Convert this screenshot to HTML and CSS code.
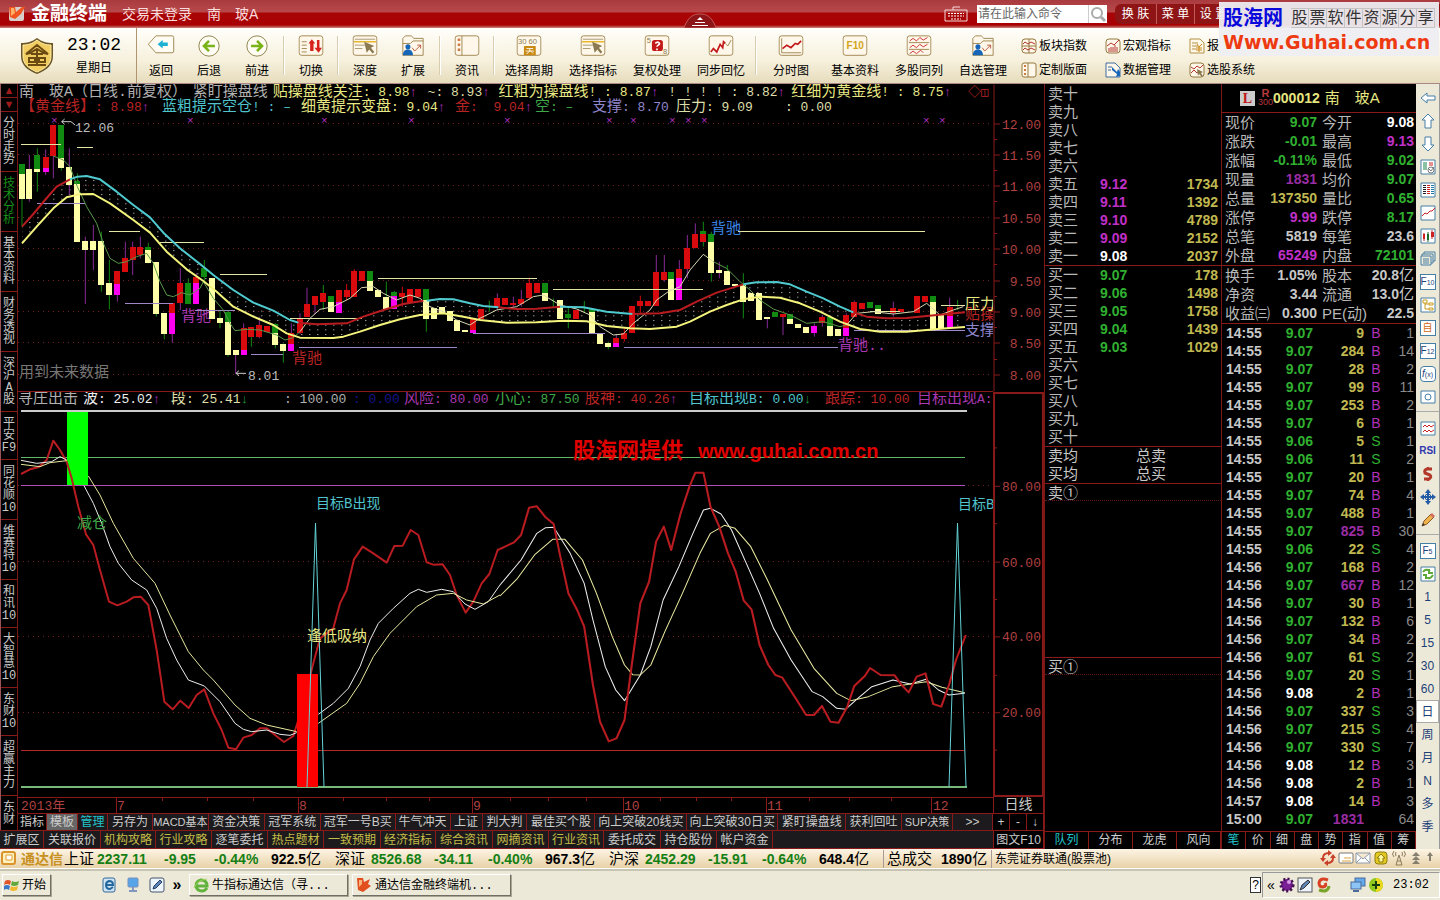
FILE: index.html
```html
<!DOCTYPE html>
<html lang="zh-CN">
<head>
<meta charset="utf-8">
<title>金融终端</title>
<link rel="stylesheet" href="styles.css">
</head>
<body>
<svg class="defs" width="0" height="0" aria-hidden="true">
  <defs>
    <symbol id="frame" viewBox="0 0 30 26"><rect x="1" y="1" width="28" height="23" rx="3" fill="#fff8ea" stroke="#94793f"/></symbol>
    <symbol id="pointer" viewBox="0 0 30 26"><rect x="1" y="1" width="28" height="23" rx="3" fill="#fff8ea" stroke="#94793f"/><path d="M3 5h24M3 12h12M3 16h9" stroke="#9c8b62" fill="none"/><path d="M2 8h26" stroke="#e8b72c" stroke-width="2"/><path d="M14 8l12 5-4 2 4 5-2 2-4-5-3 4z" fill="#8b7a51"/></symbol>
    <symbol id="folder" viewBox="0 0 30 26"><path d="M3 24V4l3-3h7l3 3h11v20z" fill="#fff8ea" stroke="#94793f"/><path d="M3 10h9l3-3h12" fill="none" stroke="#94793f"/><circle cx="9" cy="14" r="3" fill="#1565b8"/><path d="M3 24c0-5 3-7 6-7s6 2 6 7z" fill="#1565b8"/><path d="M14 15l3 4 7-7m-4 0h4v4" stroke="#b5472c" fill="none"/></symbol>
  </defs>
</svg>

<header class="titlebar">
  <svg class="logo" viewBox="0 0 18 18"><rect x="1" y="2" width="15" height="14" rx="2" fill="#d9cfca"/><path d="M1 2h6l1 5 6-5h3l-4 7-6 5-5-2z" fill="#f0551f"/><path d="M3 3h3l1 5-4 3z" fill="#ffb066"/></svg>
  <strong class="brand">金融终端</strong>
  <span class="title-text">交易未登录</span><span class="title-text">南　玻A</span>
  <button class="fold" aria-label="收起"><svg viewBox="0 0 36 16"><path d="M2 16C6 4 12 2 18 2s12 2 16 14z" fill="#8d1517" stroke="#c25a5a"/><path d="M18 5l3 3h-6z" fill="#fff"/><path d="M13 10.500h10M10 13.500h16" stroke="#fff"/></svg></button>
  <svg class="keyboard" viewBox="0 0 24 16"><path d="M1 4h22v11H1zM9 4V1h7" fill="none" stroke="#f6dada"/><path d="M4 7.500h16M4 10h16M7 13h10" stroke="#fff" stroke-dasharray="2 1"/></svg>
  <form class="search"><input type="text" placeholder="请在此输入命令" aria-label="命令"><button type="button" aria-label="搜索"><svg viewBox="0 0 18 17"><circle cx="8" cy="7" r="5" fill="none" stroke="#aaa" stroke-width="2"/><path d="M12 11l4 4" stroke="#aaa" stroke-width="3"/></svg></button></form>
  <nav class="title-menu"><button>换 肤</button><button>菜 单</button><button>设 置</button></nav>
  <div class="sponsor"><div><b>股海网</b><span class="boxed"><i>股</i><i>票</i><i>软</i><i>件</i><i>资</i><i>源</i><i>分</i><i>享</i></span></div><strong>Www.Guhai.com.cn</strong></div>
</header>

<section class="toolbar">
  <div class="clock">
    <svg viewBox="0 0 36 38"><path d="M18 1c5 4 10 5 16 5v13c0 9-6 14-16 18C8 33 2 28 2 19V6c6 0 11-1 16-5z" fill="#6b5527"/><path d="M18 3c5 4 9 5 14 5v11c0 8-5 12-14 16C9 31 4 27 4 19V8c5 0 9-1 14-5z" fill="#f2cd62" stroke="#fff0a8"/><path d="M7 17L18 8l11 9-4-1-7-4-7 4zM12 17h12M18 14v13M10 21h6v4h-6zM20 21h6v4h-6zM9 28h18" fill="none" stroke="#6b4b12" stroke-width="2"/></svg>
    <div><time>23:02</time><span>星期日</span></div>
  </div>
  <button class="tool"><svg viewBox="0 0 32 26"><path d="M1 11L10 1h19q2 0 2 2v16q0 2-2 2H10z" fill="#fffdf3" stroke="#94793f"/><path d="M12 11l6-5v3h6v4h-6v3z" fill="#1bb0d4"/></svg>返回</button>
  <button class="tool"><svg viewBox="0 0 30 26"><circle cx="15" cy="13" r="12" fill="#fffdf3" stroke="#7e7238"/><path d="M9 13h13M15 7l-6 6 6 6" fill="none" stroke="#7ab317" stroke-width="3"/></svg>后退</button>
  <button class="tool"><svg viewBox="0 0 30 26"><circle cx="15" cy="13" r="12" fill="#fffdf3" stroke="#7e7238"/><path d="M8 13h13M15 7l6 6-6 6" fill="none" stroke="#7ab317" stroke-width="3"/></svg>前进</button>
  <hr>
  <button class="tool"><svg viewBox="0 0 30 26"><use href="#frame"/><path d="M4 8h6M4 12h6M4 16h6M4 20h6" stroke="#94793f"/><path d="M12 10l4-5 4 5h-2v9h-4v-9zM19 15h3V6h3v9h3l-4 6z" fill="#d8201c"/></svg>切换</button>
  <hr>
  <button class="tool"><svg viewBox="0 0 30 26"><use href="#pointer"/></svg>深度</button>
  <button class="tool"><svg viewBox="0 0 30 26"><use href="#folder"/></svg>扩展</button>
  <hr>
  <button class="tool"><svg viewBox="0 0 30 26"><use href="#frame"/><path d="M9 1v23" stroke="#94793f"/><path d="M4 4h3v3H4zM4 10h3v3H4zM4 16h3v3H4z" fill="#cd7a40"/></svg>资讯</button>
  <hr>
  <button class="tool wide"><svg viewBox="0 0 30 26"><use href="#frame"/><text x="2" y="11" class="mini">30 60</text><rect x="9" y="13" width="14" height="11" rx="1" fill="#c98a13"/><path d="M12 16h8M11 19h10M16 16c0 3-1 5-4 6M16 18l4 4" stroke="#fff" fill="none"/></svg>选择周期</button>
  <button class="tool wide"><svg viewBox="0 0 30 26"><use href="#pointer"/></svg>选择指标</button>
  <button class="tool wide"><svg viewBox="0 0 30 26"><use href="#frame"/><rect x="9" y="6" width="13" height="13" rx="3" fill="#c3191b"/><path d="M13 10q3-3 5 0c0 2-3 2-3 4m0 2v2" fill="none" stroke="#fff" stroke-width="2"/><text x="3" y="10" class="mini">5</text><text x="22" y="23" class="mini">8</text></svg>复权处理</button>
  <button class="tool wide"><svg viewBox="0 0 30 26"><use href="#frame"/><path d="M3 20l3-4 4 4 4-9 3 4 1-7 2 2" fill="none" stroke="#c3191b" stroke-width="2"/><path d="M20 10l3 3 4-7" fill="none" stroke="#94793f"/></svg>同步回忆</button>
  <hr>
  <button class="tool wide"><svg viewBox="0 0 30 26"><use href="#frame"/><path d="M4 4v17h23" fill="none" stroke="#94793f"/><path d="M5 16l5-4 5 3 5-5 3 1 4-4" fill="none" stroke="#c3191b" stroke-width="2"/></svg>分时图</button>
  <button class="tool wide"><svg viewBox="0 0 30 26"><use href="#frame"/><text x="5" y="17" class="f10">F10</text></svg>基本资料</button>
  <button class="tool wide"><svg viewBox="0 0 30 26"><use href="#frame"/><path d="M3 9h24M3 17h24" stroke="#94793f"/><path d="M4 7l4-3 4 3 4-4 4 3 5-3M4 15l4-3 4 3 4-4 4 3 5-3M4 22l4-3 4 3 5-4 3 3" fill="none" stroke="#c3191b"/></svg>多股同列</button>
  <button class="tool wide"><svg viewBox="0 0 30 26"><use href="#folder"/></svg>自选管理</button>
  <div class="small-tools">
    <button><svg viewBox="0 0 16 16"><rect x="1" y="1" width="14" height="14" rx="3" fill="#fff8ea" stroke="#94793f"/><path d="M8 1v14M1 8h14" stroke="#94793f"/><path d="M2 6l2-2 3 2 3-2 4 2M2 12l2-2 3 2 3-2 4 2" fill="none" stroke="#b5342c"/></svg>板块指数</button>
    <button><svg viewBox="0 0 16 16"><rect x="1" y="1" width="14" height="14" rx="3" fill="#fff8ea" stroke="#94793f"/><path d="M4 14v-4M6 14V9M8 14v-5M10 14V7M12 14V9" stroke="#b5342c"/><path d="M2 8l4-3 3 2 5-5" fill="none" stroke="#b5342c"/></svg>宏观指标</button>
    <button><svg viewBox="0 0 16 16"><path d="M1 1h10l4 4v10H1z" fill="#fff8ea" stroke="#b39145"/><path d="M3 5h6M3 8h6M3 11h4" stroke="#b39145"/><path d="M8 6l2 3 3-3M10 9v5M7 10h6M7 12h6" stroke="#c8891a" fill="none"/></svg>报</button>
    <button><svg viewBox="0 0 16 16"><rect x="1" y="1" width="14" height="14" rx="2" fill="#fff8ea" stroke="#94793f"/><path d="M7 1v14" stroke="#94793f"/><path d="M3 4h2M3 8h2M3 12h2" stroke="#cd7a40" stroke-width="2"/></svg>定制版面</button>
    <button><svg viewBox="0 0 16 16"><path d="M1 1h9l5 5v9H1z" fill="#fff8ea" stroke="#3c6b9d"/><path d="M3 5h4M3 8h3" stroke="#3c6b9d"/><path d="M7 5l5 5 1-3 2 3v4l-4 1 1-3-5-4z" fill="#1565b8"/></svg>数据管理</button>
    <button><svg viewBox="0 0 16 16"><rect x="1" y="1" width="14" height="14" rx="3" fill="#fff8ea" stroke="#94793f"/><path d="M2 5l3 2 3-3 3 2 3-3M2 11l3-3 3 3 3-2" stroke="#b5342c" fill="none"/><path d="M8 7l6 3-2 1 2 3-1 1-3-3-1 2z" fill="#8b7a51"/></svg>选股系统</button>
  </div>
</section>

<main class="workspace">
  <section class="left">
    <div class="upper">
      <nav class="vtabs">
        <div class="updown"><button aria-label="上一个">▲</button><button aria-label="下一个">▼</button></div>
        <button>分<br>时<br>走<br>势</button><button class="on">技<br>术<br>分<br>析</button><button>基<br>本<br>资<br>料</button><button>财<br>务<br>透<br>视</button><button>深<br>沪<br>A<br>股</button><button>平<br>安<br>F9</button><button>同<br>花<br>顺<br>10</button><button>维<br>赛<br>特<br>10</button><button>和<br>讯<br>10</button><button>大<br>智<br>慧<br>10</button><button>东<br>财<br>10</button><button>超<br>赢<br>主<br>力</button><button class="last">东<br>财</button>
      </nav>
      <div class="charts">
        <div class="plot">
          <div class="legend l1"><span class="c-gray">南　玻A（日线.前复权）</span><span class="c-gray">紧盯操盘线</span><span class="c-yellow">贴操盘线关注<i>: 8.98</i><em>↑</em></span><span class="c-pale"><i>~: 8.93</i><em>↑</em></span><span class="c-yellow">红粗为操盘线<i>! : 8.87</i><em>↑</em></span><span class="c-pale"><i>! ! ! ! : 8.82</i><em>↑</em></span><span class="c-yellow">红细为黄金线<i>! : 8.75</i><em>↑</em></span><span class="c-red"><i>◇◫</i></span></div>
          <div class="legend l2"><span class="c-red">【黄金线】<i>: 8.98</i><em>↑</em></span><span class="c-cyan">蓝粗提示空仓<i>! : –</i></span><span class="c-yellow">细黄提示变盘<i>: 9.04</i><em>↑</em></span><span class="c-red">金<i>:  9.04</i><em>↑</em></span><span class="c-green">空<i>: –</i></span><span class="c-lilac">支撑<i>: 8.70</i></span><span class="c-pale">压力<i>: 9.09</i></span><span class="c-pale"><i>: 0.00</i></span></div>
          <svg class="kline" viewBox="18 117 975 274">
            <defs>
              <pattern id="dots" width="24" height="14" x="64" y="0" patternUnits="userSpaceOnUse"><rect width="3" height="3" fill="#ddd"/></pattern>
            </defs>
            <path class="grid" d="M18 123.500H993M18 154.500H993M18 185.500H993M18 217.500H993M18 248.500H993M18 280.500H993M18 311.500H993M18 342.500H993M18 374.500H993"/>
            <g class="marks"><text x="51" y="124">×</text><text x="187" y="124">×</text><text x="321" y="124">×</text><text x="408" y="124">×</text><text x="504" y="124">×</text><text x="606" y="124">×</text><text x="630" y="124">×</text><text x="669" y="124">×</text><text x="685" y="124">×</text><text x="701" y="124">×</text><text x="923" y="124">×</text><text x="939" y="124">×</text></g>
            <text x="181" y="321" class="c-purple">背驰</text><text x="292" y="363" class="c-red">背驰</text><text x="838" y="350" class="c-purple">背驰..</text>
            <text x="19" y="377" fill="#777">用到未来数据</text>
            <g transform="translate(0 110) scale(.33333)">
              <path fill="url(#dots)" d="M66 350L135 270L205 208L232 200L260 198L300 208L350 245L400 285L450 322L490 368L540 415L600 462L640 495L700 540L760 578L820 602L895 638L1040 640L1090 620L1150 600L1210 582L1260 572L1320 567L1360 568L1450 588L1495 592L1610 596L1680 590L1750 592L1820 605L1897 612L1980 610L2040 600L2090 575L2150 548L2230 523L2270 517L2330 516L2370 523L2470 565L2560 607L2600 620L2660 625L2720 624L2895 607V651L2780 660L2640 665L2580 657L2520 635L2460 605L2400 580L2340 563L2280 560L2230 568L2130 605L2070 635L2030 650L1950 657L1890 655L1820 648L1760 634L1690 632L1520 638L1440 630L1390 620L1330 610L1260 615L1200 628L1140 645L1080 665L1030 680L990 684H900L820 645L760 620L700 590L650 545L610 513L560 478L500 425L450 368L400 330L330 280L280 252H240L200 262L160 295L110 350L66 400z"/>
              <path class="wick green" d="M66 192V350M112 115V245M184 150V182M232 190V230M304 365V545M328 450V598M445 398V460M469 456V620M493 610V688M565 505V560M613 450V520M660 600V655M684 600V740M754 680V710M850 700V758M970 525V600M826 640V715"/>
              <path class="wick purple" d="M88 135V275M137 118V195M160 138V205M208 115V255M256 380V582M280 345V480M352 483V575M376 395V483M398 395V495M421 380V445M517 600V698M541 475V600M589 490V560M707 735V792M731 640V700M778 620V685M874 640V720M900 610V672M921 533V583M945 558V612"/>
              <path class="bar green" d="M66 162V192M112 135V178M184 45V143M445 410V420M565 518V582M613 475V500M684 605V637M826 643V668M993 558V575M232 212V222"/>
              <path class="bar yellow" d="M66 192V267M88 178V267M112 178V186M184 143V173M208 172V225M232 222V395M256 393V420M280 393V420M304 393V525M328 520V555M445 420V458M469 456V612M493 608V672M637 503V627M660 624V640M684 637V735M707 720V735M826 668V705M850 702V723M993 575V605"/>
              <path class="bar red" d="M137 142V176M160 45V138M352 483V522M376 445V486M398 410V450M421 410V435M517 578V608M541 518V580M589 500V518M731 655V720M754 650V680M778 645V682M802 648V665M874 670V702M900 628V670M921 583V622M945 558V585M970 550V575M1017 540V575"/>
              <path class="bar magenta" d="M137 175V185M352 522V555M517 608V672M589 518V582M731 720V735M874 702V722M1017 575V608"/>
              <g transform="translate(990)">
                <path class="wick green" d="M169 515V560M193 543V560M289 537V665M478 572V605M670 565V592M715 590V655M763 573V610M835 695V718M145 540V560"/>
                <path class="wick red" d="M50 522V570M217 530V590M598 503V570M73 478V560M883 655V695M931 557V610"/>
                <path class="wick purple" d="M502 550V600M550 560V590M574 540V590M859 672V710M979 435V490M1003 435V515"/>
                <path class="bar green" d="M121 484V513M193 545V557M289 537V570M646 519V548M715 613V625M787 597V606"/>
                <path class="bar yellow" d="M121 513V543M145 541V560M169 560V597M289 570V627M313 595V627M337 590V608M361 603V633M382 630V662M406 660V666M646 548V572M691 570V627M787 606V669M811 669V703M835 698V712"/>
                <path class="bar red" d="M50 540V560M73 483V560M97 484V513M217 550V560M241 537V578M265 537V562M430 625V660M454 597V628M502 563V592M526 563V585M550 578V585M574 567V583M598 518V563M622 518V550M739 600V627M859 683V700M883 668V688M907 587V668M931 573V588M955 573V588M979 487V588M1003 487V510"/>
                <path class="bar magenta" d="M193 557V597M430 660V668M859 700V712"/>
              </g>
              <g transform="translate(1980)">
                <path class="wick green" d="M130 335V410M154 365V515M202 465V525M250 490V625M511 620V680M820 558V600M893 570V600"/>
                <path class="wick purple" d="M58 450V480M82 375V505M106 340V415M178 455V505M322 622V655M369 615V675M463 640V680M583 572V610M700 575V620M869 563V600M487 615V650M559 610V660"/>
                <path class="bar green" d="M34 487V507M130 363V372M154 372V395M346 605V622M391 612V627M511 622V648M631 577V595M655 585V598M820 558V577"/>
                <path class="bar yellow" d="M34 507V570M154 395V490M178 480V490M202 482V525M226 522V528M250 525V575M274 550V573M298 550V630M322 622V628M391 627V643M415 643V655M439 650V668M511 648V678M535 657V678M655 598V612M820 577V657M844 612V657"/>
                <path class="bar red" d="M58 478V503M82 413V478M106 372V415M130 372V397M369 613V622M487 622V640M559 615V655M583 577V620M607 578V597M700 595V608M724 597V607M772 558V610M796 558V575M869 590V617"/>
                <path class="bar magenta" d="M58 503V570M463 648V668M559 655V678M869 617V655"/>
              </g>
              <path class="level pale" d="M63 103H182M231 112H279M328 364H420M480 397H612M660 495H801M870 625H1085M1135 505H1610M1660 538H2108M2215 364H2775M2823 586H2895M2610 604H2700"/>
              <path class="level lilac" d="M112 280H255M375 580H520M585 601H705M754 733H850M897 712H1372M1420 670H1815M1872 712H2514M2563 661H2895"/>
              <path class="avg green-line" d="M160 138L190 150L210 170L232 230L260 290L290 340L310 400L330 445L355 460L380 455L410 440L440 430L460 460L480 515L500 555L520 560L545 548L570 555L600 535L610 515L640 565L670 600L690 640L705 662L740 658L780 660L830 675L855 690L880 683L900 665"/>
              <path class="avg" d="M900 665L930 625L960 598L1000 590L1050 565L1085 533L1120 530L1150 550L1190 570L1230 555L1260 565L1290 590L1330 605L1370 630L1410 645L1440 625L1490 600L1550 590L1600 560L1630 555L1680 585L1730 597L1770 615L1800 650L1840 675L1870 672L1900 640L1950 600L1970 570L2005 545L2040 530L2070 480L2110 433L2140 455"/>
              <path class="avg green-line" d="M2140 455L2180 475L2220 515L2250 540L2280 570L2320 597L2370 615L2420 640L2470 635L2520 650L2540 645"/>
              <path class="avg" d="M2540 645L2570 610L2620 605L2680 612L2740 605L2780 580L2820 615L2860 600L2890 590"/>
              <path class="band red" d="M66 350L100 312L135 270L170 230L210 208M895 638L950 643L1040 640L1090 620L1150 600L1210 582L1270 572M1495 592L1550 597L1610 596L1680 590M1897 612L1980 610L2040 600L2090 575L2150 548L2230 523M2560 607L2600 620L2660 625L2720 624L2780 618L2895 607"/>
              <path class="band cyan" d="M210 208L232 200L260 198L300 208L350 245L400 285L450 322L490 368L540 415L600 462L640 495L700 540L760 578L820 602L870 630L895 638M1280 572L1320 567L1360 568L1410 580L1450 588L1495 592M1680 590L1750 592L1820 605L1897 612M2230 523L2270 517L2330 516L2370 523L2420 545L2470 565L2520 590L2560 607"/>
              <path class="band yellow" d="M66 400L110 350L160 295L200 262L240 253L280 252L330 280L400 330L450 368L500 425L560 478L610 513L650 545L700 590L760 620L820 645L860 670L900 683L1000 684L1030 680L1080 665L1140 645L1200 628L1260 615L1330 610L1390 620L1440 630L1520 638L1610 637L1690 632L1760 634L1820 648L1890 655L1950 657L2030 650L2070 635L2130 605L2180 585L2230 568L2280 560L2340 563L2400 580L2460 605L2520 635L2580 657L2640 665L2720 665L2780 660L2840 655L2895 651"/>
              <path d="M708 790h30M708 790l9-8M708 790l9 8M185 35h28l12 10M185 35l9-8M185 35l9 8" fill="none" stroke="#ccc" stroke-width="3"/>
            </g>
            <text x="75" y="132" class="num">12.06</text><text x="248" y="380" class="num">8.01</text>
            <text x="711" y="233" fill="#3a82e0">背驰</text>
            <text x="965" y="319" class="c-red">贴操</text><text x="965" y="309" class="c-yellow">压力</text><text x="965" y="335" class="c-lilac">支撑</text>
          </svg>
        </div>
        <svg class="axis" viewBox="993 84 51 307">
          <path d="M994 84V391M994 123.500h6M994 154.500h6M994 185.500h6M994 217.500h6M994 248.500h6M994 280.500h6M994 311.500h6M994 342.500h6M994 374.500h6M994 139h3M994 170h3M994 201h3M994 233h3M994 264h3M994 296h3M994 327h3M994 359h3" class="axis-line"/>
          <text x="1041" y="128">12.00</text><text x="1041" y="159">11.50</text><text x="1041" y="190">11.00</text><text x="1041" y="222">10.50</text><text x="1041" y="253">10.00</text><text x="1041" y="285">9.50</text><text x="1041" y="316">9.00</text><text x="1041" y="347">8.50</text><text x="1041" y="379">8.00</text>
        </svg>
        <div class="plot sub">
          <div class="legend l3"><span class="c-gray">寻庄出击</span><span class="c-white">波<i>: 25.02</i><em>↑</em></span><span class="c-pale">段<i>: 25.41</i><em class="down">↓</em></span><span class="c-gray"><i>: 100.00</i></span><span class="c-navy"><i>: 0.00</i></span><span class="c-purple">风险<i>: 80.00</i></span><span class="c-green">小心<i>: 87.50</i></span><span class="c-red">股神<i>: 40.26</i><em>↑</em></span><span class="c-cyan">目标出现<i>B: 0.00</i><em class="down">↓</em></span><span class="c-red">跟踪<i>: 10.00</i></span><span class="c-purple">目标出现<i>A:</i></span></div>
          <svg class="kline" viewBox="18 408 975 388">
            <path class="grid" d="M18 485.500H993M18 561.500H993M18 636.500H993M18 712.500H993"/>
            <path d="M21 411H967" stroke="#ccc" stroke-width="2"/>
            <g class="rules"><path d="M21 457.500H965" stroke="#62b866"/><path d="M21 485.500H965" stroke="#b050b8"/><path d="M21 750.500H965" stroke="#b82828"/></g>
            <path d="M21 787H967" stroke="#78b878" stroke-width="2"/>
            <rect x="67" y="412" width="21" height="73" fill="#0f0"/>
            <g transform="translate(0 400) scale(.33333)" class="osc">
              <path class="o-red" d="M63 222L90 208L115 202L140 180L160 122L180 150L200 185L215 235L235 320L258 403L280 435L300 510L327 605L352 616L380 605L400 592L422 590L445 615L470 750L493 905L518 928L541 902L566 924L590 885L613 868L640 940L665 990L685 1043L708 1048L730 1013L755 1005L780 985L800 985L825 1005L852 1026L880 1008L895 960L925 850L940 790L960 715L1000 685L1020 610L1040 570L1062 478L1088 440L1120 460L1160 488L1183 438L1208 437L1232 390L1255 405L1280 487L1300 494L1328 493L1350 525L1370 585L1397 638L1420 605L1445 550L1468 522L1493 450L1500 447"/>
              <path class="o-white" d="M63 181L110 190L155 185L180 170L200 180M252 257L280 310L305 370L330 440L355 490L395 540L440 570L470 625L500 715L530 780L565 840L613 858L660 905L705 970L730 988L755 995L800 990L840 1003L870 1006L890 998M955 943L1000 910L1045 865L1080 800L1110 720L1135 670L1180 625L1230 580L1255 568L1280 577L1325 568L1360 575L1395 612L1425 628L1465 605L1500 555"/>
              <path class="o-yellow" d="M63 193L120 200L150 188L200 182M265 228L300 285L340 370L400 475L465 550L510 645L565 755L610 810L640 840L705 915L750 955L800 975L890 995M955 970L1040 910L1080 850L1120 770L1170 700L1250 620L1310 585L1360 580L1400 600L1450 612L1500 585"/>
            </g>
            <g transform="translate(500 380) scale(.35077 .33333)" class="osc">
              <path class="o-white" d="M0 615L60 540L105 460L130 443L153 442L200 520L240 610L265 720L300 860L330 930L355 962L400 885L430 800L465 660L510 560L550 460L580 390L600 385L630 402L660 450L700 545L740 640L780 745L830 840L890 935L920 950L960 985L985 988L1020 955L1060 920L1120 900L1170 912L1215 898L1250 930L1280 945L1325 940"/>
              <path class="o-yellow" d="M0 648L50 595L100 523L150 478L185 478L235 540L275 640L320 770L355 855L378 884L400 885L430 855L470 755L520 640L570 520L600 460L640 436L670 445L715 500L760 595L830 750L895 865L960 940L1000 962L1050 950L1120 920L1170 912L1215 905L1260 922L1325 938"/>
              <path class="o-red" d="M0 507L40 487L60 465L83 383L105 379L130 412L153 432L170 520L195 640L220 690L240 740L265 915L285 1025L310 1084L332 1075L355 1020L375 860L400 670L425 605L445 485L467 440L488 510L515 400L540 320L557 278L580 278L600 380L625 440L650 520L672 575L695 662L717 688L740 795L765 855L785 885L805 893L840 950L873 1005L895 1005L918 978L942 1025L965 1028L990 980L1010 918L1040 888L1055 864L1085 885L1125 886L1145 915L1165 937L1188 890L1213 880L1235 972L1258 980L1280 915L1300 840L1328 765"/>
            </g>
            <rect x="297" y="674" width="21" height="113" fill="#f00"/>
            <path d="M307 787L315.500 523L324 787M949 787L957.500 523L966 787" fill="none" stroke="#63d3d6"/>
            <text x="316" y="508" class="c-cyan t14">目标B出现</text><text x="958" y="509" class="c-cyan t14">目标B</text>
            <text x="77" y="528" class="c-green">减仓</text><text x="307" y="641" class="c-yellow">逢低吸纳</text>
            <text x="573" y="458" class="promo"><tspan class="promo-cn">股海网提供</tspan></text><text x="698" y="458" class="promo">www.guhai.com.cn</text>
          </svg>
        </div>
        <svg class="axis sub-axis" viewBox="993 391 51 406">
          <path d="M994 392H1043V796H994z" class="axis-line bold"/>
          <path d="M994 485.500h6M994 561.500h6M994 636.500h6M994 712.500h6M994 447h3M994 523h3M994 599h3M994 675h3M994 750h3" class="axis-line"/>
          <text x="1041" y="490">80.00</text><text x="1041" y="566">60.00</text><text x="1041" y="641">40.00</text><text x="1041" y="717">20.00</text>
        </svg>
        <svg class="dates" viewBox="18 797 975 16">
          <path d="M18 797.500H993M116.500 797V813M298.500 797V813M472.500 797V813M623.500 797V813M766.500 797V813M931.500 797V813M162.500 797v4M207.500 797v4M253.500 797v4M343.500 797v4M386.500 797v4M429.500 797v4M510.500 797v4M548.500 797v4M586.500 797v4M660.500 797v4M696.500 797v4M731.500 797v4M809.500 797v4M849.500 797v4M891.500 797v4" class="axis-line"/>
          <text x="21" y="810">2013年</text><text x="117" y="810">7</text><text x="299" y="810">8</text><text x="473" y="810">9</text><text x="624" y="810">10</text><text x="767" y="810">11</text><text x="933" y="810">12</text>
        </svg>
        <div class="period">日线</div>
        <nav class="tabs row1"><button class="nobg">指标</button><button class="sel">模板</button><button class="cy">管理</button><button>另存为</button><button class="tight">MACD基本</button><button>资金决策</button><button>冠军系统</button><button>冠军一号B买</button><button>牛气冲天</button><button>上证</button><button>判大判</button><button>最佳买个股</button><button>向上突破20线买</button><button>向上突破30日买</button><button>紧盯操盘线</button><button>获利回吐</button><button class="tight">SUP决策</button><button>&gt;&gt;</button></nav>
        <nav class="tabs zoomers"><button class="nobg">+</button><button class="nobg">-</button><button class="nobg">↓</button></nav>
      </div>
    </div>
    <nav class="tabs row2"><button>扩展区</button><button>关联报价</button><button class="ye">机构攻略</button><button class="ye">行业攻略</button><button>逐笔委托</button><button class="ye">热点题材</button><button class="ye">一致预期</button><button class="ye">经济指标</button><button class="ye">综合资讯</button><button class="ye">网摘资讯</button><button class="ye">行业资讯</button><button>委托成交</button><button>持仓股份</button><button>帐户资金</button><span></span><button class="nobg">图文F10</button></nav>
  </section>

  <section class="book">
    <table class="quotes">
      <tr><th>卖十<td><td></tr><tr><th>卖九<td><td></tr><tr><th>卖八<td><td></tr><tr><th>卖七<td><td></tr><tr><th>卖六<td><td></tr>
      <tr><th>卖五<td class="up">9.12<td>1734</tr><tr><th>卖四<td class="up">9.11<td>1392</tr><tr><th>卖三<td class="up">9.10<td>4789</tr><tr><th>卖二<td class="up">9.09<td>2152</tr><tr><th>卖一<td class="eq">9.08<td>2037</tr>
    </table>
    <table class="quotes">
      <tr><th>买一<td class="dn">9.07<td>178</tr><tr><th>买二<td class="dn">9.06<td>1498</tr><tr><th>买三<td class="dn">9.05<td>1758</tr><tr><th>买四<td class="dn">9.04<td>1439</tr><tr><th>买五<td class="dn">9.03<td>1029</tr>
      <tr><th>买六<td><td></tr><tr><th>买七<td><td></tr><tr><th>买八<td><td></tr><tr><th>买九<td><td></tr><tr><th>买十<td><td></tr>
    </table>
    <div class="sums"><span>卖均</span><span>总卖</span><span>买均</span><span>总买</span></div>
    <div class="queue"><p>卖①</p></div>
    <div class="queue"><p>买①</p></div>
    <nav class="tabs four"><button class="cy nobg">队列</button><button class="nobg">分布</button><button class="nobg">龙虎</button><button class="nobg">风向</button></nav>
  </section>

  <section class="info">
    <h1><span class="flag">L</span><span class="r300"><b>R</b>300</span><b>000012</b><span>南　玻A</span></h1>
    <table class="facts">
      <tr><th>现价<td class="dn">9.07<th>今开<td class="eq">9.08</tr>
      <tr><th>涨跌<td class="dn">-0.01<th>最高<td class="up">9.13</tr>
      <tr><th>涨幅<td class="dn">-0.11%<th>最低<td class="dn">9.02</tr>
      <tr><th>现量<td class="pu">1831<th>均价<td class="dn">9.07</tr>
      <tr><th>总量<td class="vo">137350<th>量比<td class="dn">0.65</tr>
      <tr><th>涨停<td class="up">9.99<th>跌停<td class="dn">8.17</tr>
      <tr><th>总笔<td>5819<th>每笔<td>23.6</tr>
      <tr><th>外盘<td class="up">65249<th>内盘<td class="dn">72101</tr>
    </table>
    <table class="facts">
      <tr><th>换手<td>1.05%<th>股本<td>20.8<i>亿</i></tr>
      <tr><th>净资<td>3.44<th>流通<td>13.0<i>亿</i></tr>
      <tr><th>收益㈢<td>0.300<th>PE(动)<td>22.5</tr>
    </table>
    <table class="tape">
      <tr><td>14:55<td>9.07<td>9<td>B<td>1</tr>
      <tr><td>14:55<td>9.07<td>284<td>B<td>14</tr>
      <tr><td>14:55<td>9.07<td>28<td>B<td>2</tr>
      <tr><td>14:55<td>9.07<td>99<td>B<td>11</tr>
      <tr><td>14:55<td>9.07<td>253<td>B<td>2</tr>
      <tr><td>14:55<td>9.07<td>6<td>B<td>1</tr>
      <tr><td>14:55<td>9.06<td>5<td class="s">S<td>1</tr>
      <tr><td>14:55<td>9.06<td>11<td class="s">S<td>2</tr>
      <tr><td>14:55<td>9.07<td>20<td>B<td>1</tr>
      <tr><td>14:55<td>9.07<td>74<td>B<td>4</tr>
      <tr><td>14:55<td>9.07<td>488<td>B<td>1</tr>
      <tr><td>14:55<td>9.07<td class="big">825<td>B<td>30</tr>
      <tr><td>14:55<td>9.06<td>22<td class="s">S<td>4</tr>
      <tr><td>14:56<td>9.07<td>168<td>B<td>2</tr>
      <tr><td>14:56<td>9.07<td class="big">667<td>B<td>12</tr>
      <tr><td>14:56<td>9.07<td>30<td>B<td>1</tr>
      <tr><td>14:56<td>9.07<td>132<td>B<td>6</tr>
      <tr><td>14:56<td>9.07<td>34<td>B<td>2</tr>
      <tr><td>14:56<td>9.07<td>61<td class="s">S<td>2</tr>
      <tr><td>14:56<td>9.07<td>20<td class="s">S<td>1</tr>
      <tr><td>14:56<td class="eq">9.08<td>2<td>B<td>1</tr>
      <tr><td>14:56<td>9.07<td>337<td class="s">S<td>3</tr>
      <tr><td>14:56<td>9.07<td>215<td class="s">S<td>4</tr>
      <tr><td>14:56<td>9.07<td>330<td class="s">S<td>7</tr>
      <tr><td>14:56<td class="eq">9.08<td>12<td>B<td>3</tr>
      <tr><td>14:56<td class="eq">9.08<td>2<td>B<td>1</tr>
      <tr><td>14:57<td class="eq">9.08<td>14<td>B<td>3</tr>
      <tr><td>15:00<td>9.07<td class="big">1831<td><td>64</tr>
    </table>
    <nav class="tabs eight"><button class="cy nobg">笔</button><button class="nobg">价</button><button class="nobg">细</button><button class="nobg">盘</button><button class="nobg">势</button><button class="nobg">指</button><button class="nobg">值</button><button class="nobg">筹</button></nav>
  </section>

  <nav class="strip">
    <button aria-label="左"><svg viewBox="0 0 16 16"><path d="M1 8l6-5v3h8v4H7v3z" fill="#fff" stroke="#467fa6"/></svg></button>
    <button aria-label="上"><svg viewBox="0 0 16 16"><path d="M8 1l6 6h-3v8H5V7H2z" fill="#fff" stroke="#467fa6"/></svg></button>
    <button aria-label="下"><svg viewBox="0 0 16 16"><path d="M8 15l6-6h-3V1H5v8H2z" fill="#fff" stroke="#467fa6"/></svg></button>
    <button aria-label="检查"><svg viewBox="0 0 16 16"><path d="M1 1h14v14H1z" fill="#fff" stroke="#467fa6"/><path d="M3 4h4M3 6h4M3 8h4M3 10h4" stroke="#188548"/><path d="M9 4h4M9 6h4" stroke="#c22"/><circle cx="11" cy="11" r="3" fill="#fff" stroke="#777"/><path d="M9 10l2 2 3-4" fill="none" stroke="#777"/></svg></button>
    <button aria-label="列表"><svg viewBox="0 0 16 16"><path d="M1 1h14v14H1z" fill="#fff" stroke="#467fa6"/><path d="M3 3.500h3M3 5.500h3M3 7.500h3M3 9.500h3M3 11.500h3" stroke="#222"/><path d="M7 3.500h3M7 5.500h3M7 7.500h3M7 9.500h3M7 11.500h3" stroke="#c22"/><path d="M11 3.500h3M11 5.500h3M11 7.500h3M11 9.500h3M11 11.500h3" stroke="#27a"/></svg></button>
    <button aria-label="走势"><svg viewBox="0 0 16 16"><path d="M1 1h14v14H1z" fill="#fff" stroke="#467fa6"/><path d="M2 11l3-3 2 1 3-3h2l3-3" fill="none" stroke="#c22"/></svg></button>
    <button aria-label="K线"><svg viewBox="0 0 16 16"><path d="M1 1h14v14H1z" fill="#fff" stroke="#467fa6"/><path d="M4 5v8M12 2v9" stroke="#c22"/><path d="M3 6h2v5H3zM11 4h3v5h-3z" fill="#c22"/><path d="M8 4v10" stroke="#186b2a"/><path d="M7 6h2v6H7z" fill="#186b2a"/></svg></button>
    <button aria-label="窗口"><svg viewBox="0 0 16 16"><path d="M4 3V1h11v9h-2M2 5V3h11v9h-2M1 5h10v9H1zM3 8h6M3 10h6M3 12h6" fill="none" stroke="#467fa6"/></svg></button>
    <button><span class="key">F<small>10</small></span></button>
    <button aria-label="树"><svg viewBox="0 0 16 16"><path d="M1 1h14v14H1z" fill="#fff" stroke="#467fa6"/><path d="M3 3h4v3H3zM9 6h4v2H9zM9 11h4v2H9zM5 6v6h4M5 7h4" fill="none" stroke="#c79c1c"/></svg></button>
    <button><span class="key orange">自</span></button>
    <button><span class="key">F<small>12</small></span></button>
    <button><span class="key round"><i>f</i><small>(x)</small></span></button>
    <button aria-label="圆"><svg viewBox="0 0 16 16"><path d="M1 2h14v12H1z" fill="#fff" stroke="#467fa6"/><circle cx="8" cy="8" r="3" fill="none" stroke="#467fa6"/></svg></button>
    <hr>
    <button aria-label="指标"><svg viewBox="0 0 16 16"><path d="M1 2h14v13H1z" fill="#fff" stroke="#467fa6"/><path d="M3 7l2-2 2 2 2-2 2 2 3-2M3 12l2-2 2 2 2-2 2 2 3-2" fill="none" stroke="#c22"/></svg></button>
    <button class="rsi">RSI</button>
    <button aria-label="刷"><svg viewBox="0 0 16 16"><path d="M12 3H7Q4 4 5 7l5 2q2 2-1 4H4" fill="none" stroke="#b2382a" stroke-width="3"/><path d="M8 1v2M8 13v2" stroke="#b2382a" stroke-width="2"/></svg></button>
    <button aria-label="移动"><svg viewBox="0 0 16 16"><path d="M8 0l3 4H5zM8 16l3-4H5zM0 8l4-3v6zM16 8l-4-3v6z" fill="#245ba5"/><path d="M8 3v10M3 8h10" stroke="#245ba5" stroke-width="2"/><circle cx="8" cy="8" r="3" fill="none" stroke="#245ba5"/></svg></button>
    <button aria-label="画线"><svg viewBox="0 0 16 16"><path d="M2 14l2-5 7-7 3 3-7 7z" fill="#efb34d" stroke="#8c5a22"/><path d="M10 3l2-2 3 3-2 2z" fill="#d06f66"/><path d="M2 14l1-3 2 2z" fill="#333"/></svg></button>
    <hr>
    <button><span class="key">F<small>5</small></span></button>
    <button aria-label="刷新"><svg viewBox="0 0 16 16"><path d="M1 1h14v14H1z" fill="#fff" stroke="#467fa6"/><path d="M3 6q3-4 7-1M13 9q-3 5-7 2M9 3v4h4M6 13V9H3" fill="none" stroke="#5aa935" stroke-width="2"/></svg></button>
    <button>1</button><button>5</button><button>15</button><button>30</button><button>60</button><button class="picked">日</button><button>周</button><button>月</button><button>N</button><button>多</button><button>季</button>
  </nav>
</main>

<section class="indices">
  <span class="ticker"><svg viewBox="0 0 16 16"><rect x="1" y="2" width="13" height="12" rx="2" fill="#fff0c0" stroke="#d9952c" stroke-width="2"/><path d="M5 5h6v5H5z" fill="#fff" stroke="#e0a030"/></svg></span>
  <b class="tdx">通达信</b><span>上证</span><b class="g">2237.11</b><b class="g">-9.95</b><b class="g">-0.44%</b><b>922.5<i>亿</i></b><span>深证</span><b class="g">8526.68</b><b class="g">-34.11</b><b class="g">-0.40%</b><b>967.3<i>亿</i></b><span>沪深</span><b class="g">2452.29</b><b class="g">-15.91</b><b class="g">-0.64%</b><b>648.4<i>亿</i></b><span class="cut">总成交</span><b>1890<i>亿</i></b><span class="cut broker">东莞证券联通(股票池)</span>
  <span class="state">
    <svg viewBox="0 0 16 16"><path d="M3 8q0-5 6-5M13 8q0 5-6 5" fill="none" stroke="#c8402a" stroke-width="2"/><path d="M8 0l4 3-4 3zM8 10l-4 3 4 3zM0 8h6l-3 4zM10 8h6l-3-4z" fill="#c8402a"/></svg>
    <svg viewBox="0 0 16 16"><rect x="1" y="3" width="14" height="10" rx="1" fill="#fff" stroke="#777"/><path d="M6 8h7M4 11h9" stroke="#dba33c"/></svg>
    <svg viewBox="0 0 16 16"><path d="M1 3h14v10H1zl7 6 7-6M1 13l5-5M15 13l-5-5" fill="#fff" stroke="#8d9aab"/></svg>
    <svg viewBox="0 0 16 16"><rect x="2" y="2" width="12" height="12" rx="3" fill="#e2c820" stroke="#8e7d10"/><path d="M8 4l4 4h-2v4H6V8H4z" fill="#fff6a0" stroke="#8e7d10"/></svg>
    <svg viewBox="0 0 16 16"><path d="M8 5l-3 10h6zM6 11h4M3 1q-3 3 0 6M13 1q3 3 0 6M5 2q-1 2 0 4M11 2q1 2 0 4" fill="none" stroke="#8a7c5c"/></svg>
    <svg viewBox="0 0 16 16"><path d="M8 2l4 4H4zM8 6l4 4H4zM8 10l4 4H4z" fill="#857f70"/></svg>
    <svg class="thin" viewBox="0 0 8 16"><path d="M4 3v8" stroke="#857f70" stroke-width="2"/><path d="M1 6l3-4 3 4z" fill="#857f70"/></svg>
  </span>
</section>

<footer class="taskbar">
  <button class="start"><svg viewBox="0 0 16 16"><path d="M1 4q3-2 6 0l-1 4q-3-2-6 0z" fill="#e2552a"/><path d="M8 4q3 2 7 0l-1 4q-4 2-7 0z" fill="#62a83c"/><path d="M0 9q3-2 6 0l-1 4q-3-2-5 0z" fill="#3b78c8"/><path d="M7 9q3 2 7 0l-1 4q-4 2-7 0z" fill="#efb82d"/></svg>开始</button>
  <div class="quick">
    <button aria-label="浏览器"><svg viewBox="0 0 16 16"><rect x="2" y="1" width="12" height="14" rx="2" fill="#cfe4f4" stroke="#356a99"/><path d="M5 8h7q0-4-4-4-3 1-3 4 0 4 4 4l3-2" fill="none" stroke="#23689d" stroke-width="2"/></svg></button>
    <button aria-label="桌面"><svg viewBox="0 0 16 16"><rect x="3" y="1" width="10" height="9" rx="1" fill="#57a5e8" stroke="#7b91bb"/><path d="M8 10v3M4 14h8" stroke="#8297be" stroke-width="2"/></svg></button>
    <button aria-label="记事"><svg viewBox="0 0 16 16"><rect x="1" y="1" width="14" height="14" rx="2" fill="#eef4fb" stroke="#45556c"/><path d="M4 12l1-3 6-6 2 2-6 6z" fill="#5c84b8" stroke="#27405f"/></svg></button>
  </div>
  <span class="more">»</span>
  <button class="task"><svg viewBox="0 0 16 16"><path d="M4 9h10q0-6-6-6-5 1-5 6 1 5 6 5 3 0 5-3" fill="none" stroke="#62b33d" stroke-width="3"/><path d="M1 11Q4 3 14 2" fill="none" stroke="#a5d55e"/></svg><span>牛指标通达信（寻<i>...</i></span></button>
  <button class="task"><svg viewBox="0 0 16 16"><path d="M1 1h6l1 4 6-3-2 5 3 2-8 6-5-2z" fill="#e2501f"/><path d="M3 3h3v4l-3 3z" fill="#ffb37c"/></svg><span>通达信金融终端机<i>...</i></span></button>
  <span class="help">?</span>
  <div class="tray"><span>«</span>
    <svg viewBox="0 0 16 16"><circle cx="8" cy="8" r="6" fill="#7a1f96" stroke="#41104f" stroke-dasharray="2 2" stroke-width="3"/><circle cx="10" cy="5" r="2" fill="#d79be8"/></svg>
    <svg viewBox="0 0 16 16"><rect x="1" y="1" width="14" height="14" fill="#eef4fb" stroke="#555"/><path d="M3 13l2-5 6-5 2 2-6 6z" fill="#5c84b8" stroke="#333"/></svg>
    <svg viewBox="0 0 16 16"><path d="M13 3q-8-3-9 3 0 4 4 4 4-1 2-4" fill="none" stroke="#d84124" stroke-width="3"/><path d="M4 13q9 3 10-4" fill="none" stroke="#7aa32a" stroke-width="3"/></svg>
    <svg class="gap" viewBox="0 0 16 16"><rect x="5" y="1" width="10" height="8" fill="#62a8ea" stroke="#4a6b9a"/><rect x="1" y="5" width="10" height="7" fill="#8cc4f5" stroke="#4a6b9a"/><path d="M3 14h6" stroke="#4a6b9a" stroke-width="2"/></svg>
    <svg viewBox="0 0 16 16"><circle cx="8" cy="8" r="7" fill="#8fc71c"/><path d="M8 1a7 7 0 010 14z" fill="#e8d820"/><path d="M8 4v8M4 8h8" stroke="#143a10" stroke-width="2"/></svg>
    <time>23:02</time></div>
</footer>
</body>
</html>
```
FILE: styles.css
```css
* { box-sizing: border-box; }
body { margin: 0; min-height: 100vh; display: flex; flex-direction: column; background: #ece9d8; color: #000; font: 12px/16px "Liberation Sans", "Noto Sans CJK SC", sans-serif; overflow-x: hidden; }
button { margin: 0; padding: 0; border: 0; background: none; color: inherit; font: inherit; white-space: nowrap; }
svg { display: block; }
i { font-style: normal; font-weight: 400; }
.defs { position: absolute; }

/* title bar */
.titlebar { position: relative; height: 28px; display: flex; align-items: center; padding-left: 8px; color: #fff; background: linear-gradient(#a93b3f 0, #b8484a 12px, #a90507 13px, #a80003 25px, #c98a80 28px); }
.logo { width: 18px; height: 18px; margin-right: 5px; }
.brand { font-size: 19px; margin-right: 15px; }
.title-text { font-size: 14px; margin-right: 15px; color: #f8dcdc; }
.fold { position: absolute; left: 50%; bottom: 0; width: 36px; margin-left: -38px; }
.keyboard { width: 24px; height: 16px; margin-left: auto; margin-right: 9px; }
.search { display: flex; width: 130px; height: 18px; background: #fff; }
.search input { flex: 1; min-width: 0; border: 0; padding: 0 1px; font: inherit; background: #fff; }
.search input::placeholder { color: #666; opacity: 1; }
.search button { width: 19px; border-left: 1px solid #ccc; }
.title-menu { display: flex; margin-left: 8px; width: 325px; height: 20px; background: #8f1416; border-radius: 6px 0 0 6px; }
.title-menu button { width: 38px; border-right: 1px solid #c25a5a; }
.title-menu button:first-child { width: 42px; }
.sponsor { position: absolute; right: 1px; top: 2px; width: 220px; height: 54px; padding: 0 4px; background: rgba(238, 238, 242, .94); z-index: 2; }
.sponsor div { display: flex; align-items: center; justify-content: space-between; height: 32px; }
.sponsor b { font-size: 20px; color: #0a0adc; }
.boxed { display: flex; color: #333; font-size: 16px; line-height: 18px; }
.boxed i { width: 18px; border: 1px solid #c4c4c4; border-left-width: 0; text-align: center; }
.sponsor strong { display: block; font: bold 19px/17px "DejaVu Sans", sans-serif; color: #ee3a10; }

/* tool bar */
.toolbar { display: flex; height: 56px; background: linear-gradient(#fffefa, #f6f0dc 60%, #e6dcbc); border-bottom: 1px solid #a88; }
.clock { width: 137px; display: flex; align-items: center; padding-left: 19px; gap: 12px; border-right: 1px solid #b09470; }
.clock svg { width: 36px; height: 38px; }
.clock div { text-align: center; }
.clock time { display: block; font: 18px/24px "Liberation Mono", monospace; }
.clock span { display: block; line-height: 22px; }
.tool { width: 48px; display: flex; flex-direction: column; align-items: center; padding-top: 7px; line-height: 24px; gap: 2px; }
.tool.wide { width: 64px; }
.tool > svg { width: 30px; height: 26px; }
.toolbar hr { width: 2px; margin: 8px 2px; border: 0; border-left: 1px solid #d8cdb0; border-right: 1px solid #fff; }
.mini { font: 9px "Liberation Sans", sans-serif; fill: #8b7a51; }
.f10 { font: bold 12px "Liberation Sans", sans-serif; fill: #d3a51c; }
.small-tools { display: grid; grid-template-columns: repeat(3, 84px); grid-auto-rows: 24px; padding: 6px 0 0 6px; }
.small-tools button { display: flex; align-items: center; gap: 2px; }
.small-tools svg { width: 16px; height: 16px; }

/* workspace */
.workspace { display: grid; grid-template-columns: minmax(0, 1fr) 178px 194px 24px; background: #000; color: #c8c8c8; flex: 1; }
.left { display: flex; flex-direction: column; }
.upper { display: grid; grid-template-columns: 18px minmax(0, 1fr); flex: 1; }
.vtabs { display: flex; flex-direction: column; border-left: 1px solid #955; border-right: 1px solid #7a1818; }
.vtabs > button { padding: 6px 0; font: 12px/12px "Liberation Mono", "Noto Sans CJK SC", monospace; border-bottom: 1px solid #8a1a1a; height: 60px; overflow: hidden; }
.vtabs > button:nth-of-type(6), .vtabs > button:nth-of-type(9), .vtabs > button:nth-of-type(11) { height: 48px; }
.vtabs > .on { color: #189018; }
.vtabs > .last { height: 34px; border-bottom: 0; }
.updown { display: grid; grid-template-rows: 14px 14px; }
.updown button { color: #9c1b1b; border-bottom: 1px solid #8a1a1a; font-size: 11px; line-height: 13px; }
.charts { display: grid; grid-template-columns: minmax(0, 1fr) 51px; align-content: start; }
.plot { min-width: 0; border-bottom: 1px solid #8a1a1a; height: 308px; padding-top: 2px; overflow: hidden; }
.plot.sub { height: 405px; border: 0; padding: 0; }
.legend { display: grid; height: 14px; font: 15px/14px "Liberation Mono", "Noto Sans CJK SC", monospace; white-space: pre; }
.legend span { min-width: 0; }
.legend i { font-size: 13px; }
.legend em { font-style: normal; font-size: 13px; color: #b22cc0; }
.legend .down { color: #1f9a36; }
.l1 { grid-template-columns: 174fr 80fr 155fr 71fr 170fr 123fr 177fr 25fr; padding-left: 1px; height: 15px; }
.l2 { grid-template-columns: 142fr 139fr 154fr 80fr 57fr 84fr 109fr 208fr; padding-left: 2px; height: 16px; }
.l3 { grid-template-columns: 65fr 88fr 113fr 69fr 51fr 91fr 90fr 104fr 136fr 92fr 76fr; height: 16px; line-height: 16px; }
.kline { width: 100%; overflow: visible; font: 15px "Liberation Mono", "Noto Sans CJK SC", monospace; }
.kline .t14 { font-size: 14px; }
.num { font-size: 13px; fill: #bbb; }
.promo { font: bold 20px "Liberation Sans", sans-serif; fill: #e00000; }
.promo-cn { font: bold 22px "Noto Sans CJK SC", sans-serif; }
.marks { font-size: 11px; fill: #b030c0; }
.grid { fill: none; stroke: #6c2020; stroke-dasharray: 1 4; }
.wick { fill: none; stroke-width: 3; }
.bar { fill: none; stroke-width: 18; shape-rendering: crispEdges; }
.rules, .level { shape-rendering: crispEdges; }
.green { stroke: #118a11; }
.purple { stroke: #8a2a98; }
.yellow { stroke: #ffffa8; }
.red { stroke: #d80a0e; }
.magenta { stroke: #ff00f0; }
.cyan { stroke: #4fcbd0; }
.level { fill: none; stroke-width: 3; }
.pale { stroke: #e6e6a4; }
.lilac { stroke: #a088c8; }
.avg { fill: none; stroke: #d8d8b0; stroke-width: 3; }
.green-line { stroke: #5a9a4a; }
.band { fill: none; stroke-width: 6; stroke-linejoin: round; }
.band.red { stroke: #b81c20; }
.band.yellow { stroke: #f4f47c; }
.osc path { fill: none; stroke-width: 3; stroke-linejoin: round; }
.osc .o-red { stroke: #b81c20; stroke-width: 6; }
.o-white { stroke: #eee; }
.o-yellow { stroke: #e8e8a0; }
.axis { width: 100%; height: 308px; font: 13px "Liberation Mono", monospace; text-anchor: end; fill: #b04040; }
.axis text, .dates text { fill: #b04040; }
.sub-axis { height: 405px; }
.axis-line { fill: none; stroke: #8a1a1a; }
.bold { stroke-width: 2; }
.dates { width: 100%; font: 13px "Liberation Mono", "Noto Sans CJK SC", monospace; }
.period { font-size: 14px; line-height: 15px; height: 16px; text-align: center; border: solid #8a1a1a; border-width: 0 1px; }
.c-gray { color: #b0b0b0; fill: #b0b0b0; }
.c-white { color: #eee; }
.c-pale { color: #dedea8; }
.c-yellow { color: #e8e884; fill: #e8e884; }
.c-red { color: #b82424; fill: #b82424; }
.c-cyan { color: #4fc4cc; fill: #4fc4cc; }
.c-green { color: #3fa848; fill: #3fa848; }
.c-lilac { color: #8f86cc; fill: #8f86cc; }
.c-purple { color: #a838b0; fill: #a838b0; }
.c-navy { color: #14148a; }

/* tabs */
.tabs { display: grid; height: 17px; border-top: 1px solid #8a1a1a; line-height: 15px; color: #ccc; }
.tabs button, .tabs > span { overflow: hidden; background: #1c1a1c; border-right: 1px solid #8a1a1a; }
.tabs .nobg { background: #000; }
.tabs .sel { background: #666; }
.tabs .cy { color: #20c4cc; }
.tabs .ye { color: #c4bc48; }
.tabs .tight { font-size: 11px; }
.row1 { grid-template-columns: 29fr 31fr 30fr 45fr 56fr 56fr 56fr 75fr 55fr 32fr 45fr 68fr 92fr 91fr 68fr 56fr 51fr 40fr; }
.zoomers { grid-template-columns: repeat(3, 1fr); }
.row2 { height: 19px; border-bottom: 1px solid #8a1a1a; line-height: 16px; grid-template-columns: 44fr 57fr 55fr 56fr 56fr 56fr 57fr 55fr 57fr 56fr 55fr 57fr 56fr 56fr 221fr 50fr; }
.four { grid-template-columns: repeat(4, 1fr); }
.eight { grid-template-columns: repeat(8, 1fr); }
.four, .eight { height: 18px; }

/* order book and quote */
.book { display: flex; flex-direction: column; border: solid #7a1818; border-width: 0 1px; padding-top: 1px; }
table { width: 100%; border-collapse: collapse; table-layout: fixed; font-weight: bold; font-size: 14px; }
td, th { padding: 0; line-height: 18px; height: 18px; white-space: nowrap; }
th { font-size: 15px; font-weight: 400; text-align: left; color: #b8b8b8; }
td { text-align: right; }
.quotes { border-bottom: 1px solid #8a1a1a; }
.quotes th { width: 55px; padding-left: 3px; }
.quotes td { padding-right: 3px; color: #c0b850; }
.quotes td:nth-child(2) { width: 40px; text-align: left; }
td.up, .quotes td.up { color: #c030c8; }
td.dn, .quotes td.dn { color: #30b030; }
td.eq, .quotes td.eq { color: #fff; }
td.pu { color: #9a2ca4; }
td.vo { color: #c0b850; }
.sums { display: grid; grid-template-columns: 88px 1fr; grid-auto-rows: 18px; padding-left: 3px; font-size: 15px; line-height: 18px; border-bottom: 1px solid #8a1a1a; }
.queue { flex: 1; border-bottom: 1px solid #8a1a1a; }
.queue:nth-of-type(3) { border-bottom: 0; }
.queue p { margin: 0; padding-left: 3px; height: 17px; font-size: 15px; line-height: 17px; border-bottom: 1px dotted #5a1818; }
.info { min-width: 0; display: flex; flex-direction: column; }
.info h1 { margin: 0; height: 29px; display: flex; align-items: center; padding-left: 18px; font-size: 15px; font-weight: 400; color: #e6e680; border-bottom: 1px solid #8a1a1a; }
.info h1 > b { font-size: 14px; margin-right: 5px; }
.flag { width: 15px; height: 15px; background: #ccc; color: #c01818; font: bold 14px/15px "Liberation Serif", serif; text-align: center; margin-right: 3px; }
.r300 { font-size: 9px; line-height: 9px; color: #b83a3a; text-align: center; }
.r300 b { display: block; font-size: 11px; }
.facts { border-bottom: 1px solid #8a1a1a; }
.facts td, .facts th { line-height: 19px; height: 19px; }
.facts th { width: 38px; padding-left: 3px; }
.facts td:nth-child(2) { width: 57px; }
.facts th:nth-child(3) { padding-left: 5px; }
.facts td:last-child { padding-right: 2px; }
.facts i { font-size: 15px; line-height: 15px; }
.tape td:nth-child(1) { width: 56px; padding-left: 4px; text-align: left; }
.tape td:nth-child(2) { width: 35px; color: #30b030; }
.tape td.eq:nth-child(2) { color: #fff; }
.tape td:nth-child(3) { width: 51px; color: #c0b850; }
.tape td.big:nth-child(3) { color: #9a2ca4; }
.tape td:nth-child(4) { width: 24px; font-weight: 400; color: #b030b8; text-align: center; }
.tape td.s:nth-child(4) { color: #30b030; }
.tape td:nth-child(5) { padding-right: 2px; font-weight: 400; color: #8a8a8a; }
.eight { margin-top: auto; }

/* side strip */
.strip { display: flex; flex-direction: column; padding-top: 2px; background: #ece9d8; border-right: 1px solid #999; color: #1c3f78; }
.strip button { height: 23px; display: flex; align-items: center; justify-content: center; }
.strip svg { width: 16px; height: 16px; }
.strip hr { width: 100%; height: 2px; margin: 3px 0; border: 0; border-top: 1px solid #aaa; }
.key { width: 16px; height: 16px; border: 1px solid #467fa6; background: #fff; font-size: 10px; line-height: 14px; text-align: center; }
.key small { font-size: 7px; }
.key.round { border-radius: 4px; }
.key.round i { font-style: italic; }
.key.orange { color: #d06a1c; }
.rsi { font-weight: bold; color: #3038b0; font-size: 10px; }
.strip .picked { background: #fffef8; border: 1px solid #aaa; }

/* index bar */
.indices { display: grid; align-items: center; height: 19px; grid-template-columns: 21fr 43fr 33fr 67fr 50fr 57fr 64fr 36fr 63fr 54fr 57fr 64fr 36fr 63fr 54fr 57fr 64fr 58fr 50fr 329fr 120fr; background: linear-gradient(#fdf4e4, #e8d2a8); font-size: 15px; line-height: 18px; white-space: nowrap; }
.indices > * { min-width: 0; height: 18px; }
.indices b { font-size: 14px; }
.indices i { font-size: 15px; line-height: 15px; }
.indices .g { color: #148014; }
.indices .tdx { color: #c89020; }
.indices .broker { font-size: 12px; }
.cut { border-left: 1px solid #a99; padding-left: 3px; }
.ticker svg { width: 16px; height: 16px; margin-left: 1px; }
.state { display: flex; justify-content: space-between; padding-right: 6px; }
.state svg { width: 16px; height: 16px; }
.state .thin { width: 8px; }

/* task bar */
.taskbar { height: 32px; display: flex; align-items: center; padding: 0 0 0 2px; border-top: 1px solid #fff; box-shadow: inset 0 2px #c8c4b4; background: #ece9d8; }
.start, .task { height: 22px; display: flex; align-items: center; border: 1px solid; border-color: #fff #716f64 #716f64 #fff; box-shadow: 1px 1px #a9a694; gap: 3px; padding: 0 3px; }
.start { width: 49px; gap: 2px; padding: 0 1px; }
.taskbar svg { width: 16px; height: 16px; flex: none; }
.quick { display: flex; gap: 8px; margin-left: 50px; }
.more { width: 24px; text-align: center; font-size: 16px; font-weight: bold; }
.task { width: 159px; margin-right: 4px; }
.task i { font: 12px "Liberation Mono", monospace; }
.help { margin-left: auto; border: 1px solid #333; width: 11px; line-height: 14px; background: #fff; text-align: center; }
.tray { width: 178px; height: 26px; margin-left: 1px; display: flex; align-items: center; gap: 2px; padding-left: 4px; border: 1px solid; border-color: #999 #fff #fff #999; }
.tray span { width: 10px; font-size: 14px; }
.tray .gap { margin-left: 17px; }
.tray time { margin-left: 7px; font: 12px "Liberation Mono", monospace; }
```
